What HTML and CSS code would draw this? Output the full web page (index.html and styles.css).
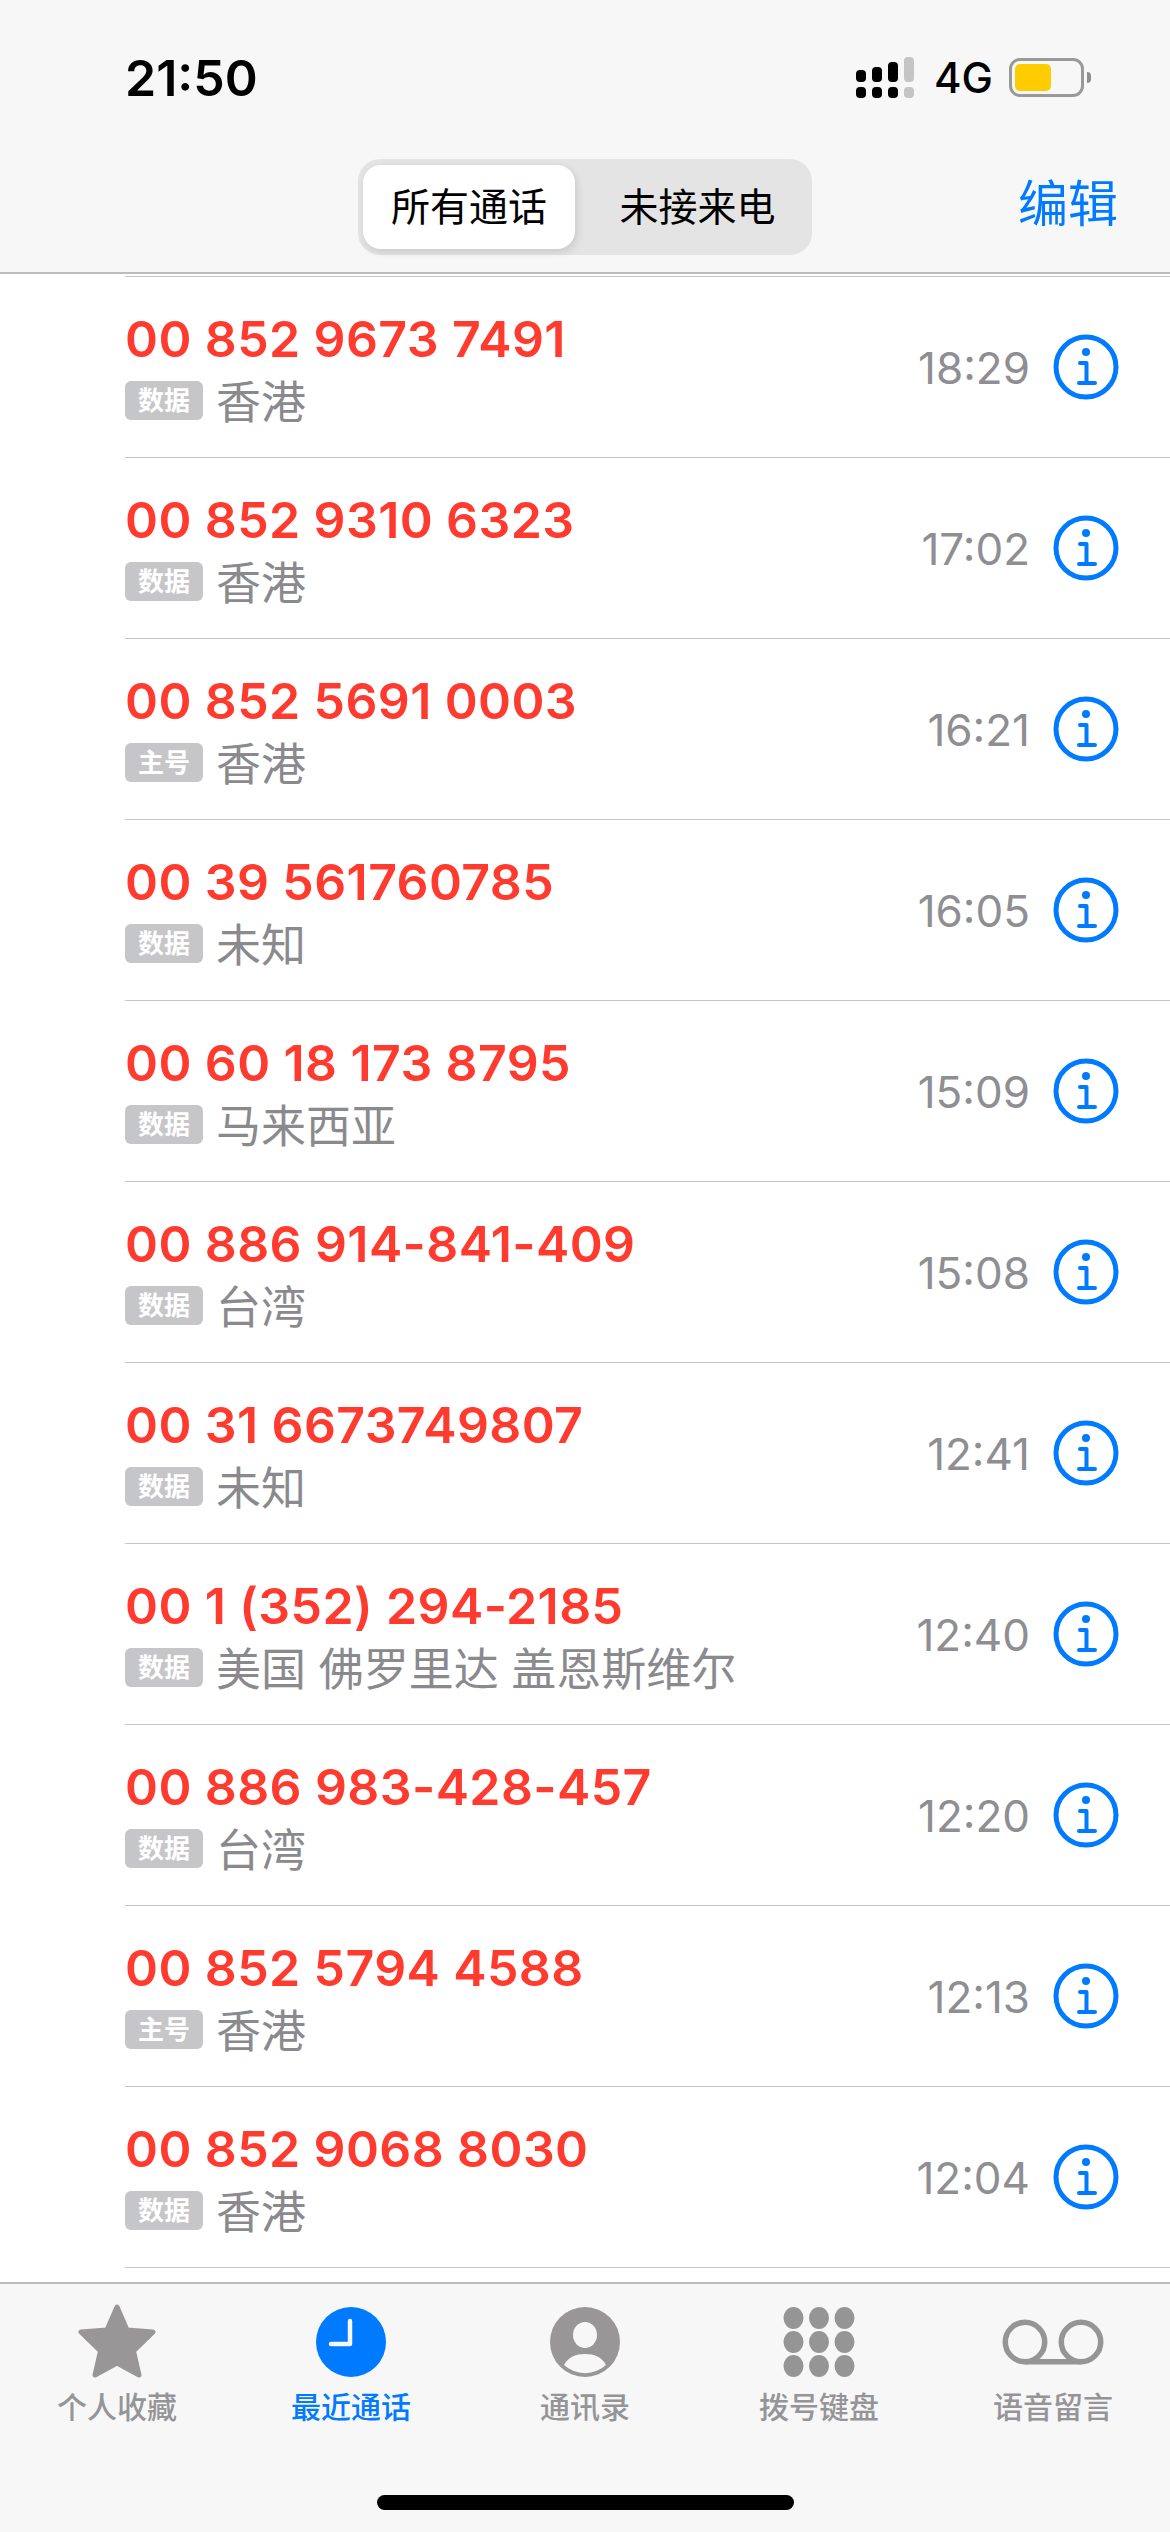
FILE: index.html
```html
<!DOCTYPE html>
<html lang="zh-CN">
<head>
  <meta charset="UTF-8">
  <meta name="viewport" content="width=device-width, initial-scale=1.0">
  <title>最近通话</title>
  <link rel="stylesheet" href="styles.css">
</head>
<body>
  <svg class="sprite" width="0" height="0">
    <symbol id="info" viewBox="0 0 66 66">
      <circle cx="33" cy="33" r="30" fill="none" stroke="#007aff" stroke-width="5"/>
      <circle cx="33" cy="18" r="4" fill="#007aff"/>
      <path d="M27 29H33.500V49M26 49H42" fill="none" stroke="#007aff" stroke-width="4" stroke-linecap="round" stroke-linejoin="round"/>
    </symbol>
  </svg>

  <div class="phone">
    <header class="top">
      <div class="status">
        <span class="clock">21:50</span>
        <div class="status-right">
          <svg class="signal" width="58" height="41" viewBox="0 0 58 41">
            <rect x="0" y="13" width="10" height="12" rx="4"/>
            <rect x="16" y="10" width="10" height="15" rx="4"/>
            <rect x="32" y="5" width="10" height="20" rx="4"/>
            <rect class="off" x="48" y="0" width="10" height="25" rx="4"/>
            <rect x="0" y="30" width="10" height="11" rx="4"/>
            <rect x="16" y="30" width="10" height="11" rx="4"/>
            <rect x="32" y="30" width="10" height="11" rx="4"/>
            <rect class="off" x="48" y="30" width="10" height="11" rx="4"/>
          </svg>
          <span class="net">4G</span>
          <div class="battery"><div class="battery-fill"></div></div>
          <div class="battery-nub"></div>
        </div>
      </div>
      <div class="nav">
        <div class="segment">
          <div class="seg-item active">所有通话</div>
          <div class="seg-item">未接来电</div>
        </div>
        <a class="edit">编辑</a>
      </div>
    </header>

    <main class="list">
      <div class="sliver"></div>

      <div class="row">
        <div class="row-main">
          <div class="number">00 852 9673 7491</div>
          <div class="meta"><span class="tag">数据</span><span class="place">香港</span></div>
        </div>
        <span class="time">18:29</span>
        <svg class="info"><use href="#info"/></svg>
      </div>
      <div class="row">
        <div class="row-main">
          <div class="number">00 852 9310 6323</div>
          <div class="meta"><span class="tag">数据</span><span class="place">香港</span></div>
        </div>
        <span class="time">17:02</span>
        <svg class="info"><use href="#info"/></svg>
      </div>
      <div class="row">
        <div class="row-main">
          <div class="number">00 852 5691 0003</div>
          <div class="meta"><span class="tag">主号</span><span class="place">香港</span></div>
        </div>
        <span class="time">16:21</span>
        <svg class="info"><use href="#info"/></svg>
      </div>
      <div class="row">
        <div class="row-main">
          <div class="number">00 39 561760785</div>
          <div class="meta"><span class="tag">数据</span><span class="place">未知</span></div>
        </div>
        <span class="time">16:05</span>
        <svg class="info"><use href="#info"/></svg>
      </div>
      <div class="row">
        <div class="row-main">
          <div class="number">00 60 18 173 8795</div>
          <div class="meta"><span class="tag">数据</span><span class="place">马来西亚</span></div>
        </div>
        <span class="time">15:09</span>
        <svg class="info"><use href="#info"/></svg>
      </div>
      <div class="row">
        <div class="row-main">
          <div class="number">00 886 914-841-409</div>
          <div class="meta"><span class="tag">数据</span><span class="place">台湾</span></div>
        </div>
        <span class="time">15:08</span>
        <svg class="info"><use href="#info"/></svg>
      </div>
      <div class="row">
        <div class="row-main">
          <div class="number">00 31 6673749807</div>
          <div class="meta"><span class="tag">数据</span><span class="place">未知</span></div>
        </div>
        <span class="time">12:41</span>
        <svg class="info"><use href="#info"/></svg>
      </div>
      <div class="row">
        <div class="row-main">
          <div class="number">00 1 (352) 294-2185</div>
          <div class="meta"><span class="tag">数据</span><span class="place">美国 佛罗里达 盖恩斯维尔</span></div>
        </div>
        <span class="time">12:40</span>
        <svg class="info"><use href="#info"/></svg>
      </div>
      <div class="row">
        <div class="row-main">
          <div class="number">00 886 983-428-457</div>
          <div class="meta"><span class="tag">数据</span><span class="place">台湾</span></div>
        </div>
        <span class="time">12:20</span>
        <svg class="info"><use href="#info"/></svg>
      </div>
      <div class="row">
        <div class="row-main">
          <div class="number">00 852 5794 4588</div>
          <div class="meta"><span class="tag">主号</span><span class="place">香港</span></div>
        </div>
        <span class="time">12:13</span>
        <svg class="info"><use href="#info"/></svg>
      </div>
      <div class="row">
        <div class="row-main">
          <div class="number">00 852 9068 8030</div>
          <div class="meta"><span class="tag">数据</span><span class="place">香港</span></div>
        </div>
        <span class="time">12:04</span>
        <svg class="info"><use href="#info"/></svg>
      </div>
    </main>

    <footer class="tabbar">
      <div class="tabs">
        <div class="tab">
          <svg class="tab-icon" width="80" height="76" viewBox="0 0 80 76">
            <path d="M40 3L50 26L76 28L56.500 47L62 71L40 59L18 71L23.500 47L4 28L30 26Z" fill="#989696" stroke="#989696" stroke-width="5" stroke-linejoin="round"/>
          </svg>
          <span>个人收藏</span>
        </div>
        <div class="tab active">
          <svg class="tab-icon" width="70" height="70" viewBox="0 0 70 70">
            <circle cx="35" cy="35" r="35" fill="#007aff"/>
            <path d="M34 14V37H15" fill="none" stroke="#f7f7f8" stroke-width="4.500" stroke-linecap="round" stroke-linejoin="round"/>
          </svg>
          <span>最近通话</span>
        </div>
        <div class="tab">
          <svg class="tab-icon" width="70" height="70" viewBox="0 0 70 70">
            <circle cx="35" cy="35" r="35" fill="#989696"/>
            <ellipse cx="35" cy="28" rx="12" ry="13" fill="#f7f7f8"/>
            <path d="M14 58C18 50 26 47 35 47C44 47 52 50 56 58A31 31 0 0 1 14 58Z" fill="#f7f7f8"/>
          </svg>
          <span>通讯录</span>
        </div>
        <div class="tab">
          <svg class="tab-icon" width="72" height="70" viewBox="0 0 72 70" fill="#959595">
            <ellipse cx="10.500" cy="11" rx="10" ry="11"/>
            <ellipse cx="36" cy="11" rx="10" ry="11"/>
            <ellipse cx="61.500" cy="11" rx="10" ry="11"/>
            <ellipse cx="10.500" cy="35" rx="10" ry="11"/>
            <ellipse cx="36" cy="35" rx="10" ry="11"/>
            <ellipse cx="61.500" cy="35" rx="10" ry="11"/>
            <ellipse cx="10.500" cy="59" rx="10" ry="11"/>
            <ellipse cx="36" cy="59" rx="10" ry="11"/>
            <ellipse cx="61.500" cy="59" rx="10" ry="11"/>
          </svg>
          <span>拨号键盘</span>
        </div>
        <div class="tab">
          <svg class="tab-icon" width="104" height="70" viewBox="0 0 104 70">
            <g fill="none" stroke="#959595" stroke-width="5.500">
              <circle cx="24" cy="35" r="19.700"/>
              <circle cx="80" cy="35" r="19.700"/>
              <path d="M24 54.700H80"/>
            </g>
          </svg>
          <span>语音留言</span>
        </div>
      </div>
      <div class="home-bar"></div>
    </footer>
  </div>
</body>
</html>
```

FILE: styles.css
```css
* {
  box-sizing: border-box;
}
html, body {
  margin: 0;
  padding: 0;
}
body {
  font-family: Inter, "Noto Sans CJK SC", sans-serif;
  background: #fff;
}
.sprite {
  position: absolute;
}
.phone {
  width: 1170px;
  height: 2532px;
  display: flex;
  flex-direction: column;
  overflow: hidden;
}

/* top area */
.top {
  height: 274px;
  flex: none;
  background: #f7f7f8;
  border-bottom: 2px solid #bcbcbe;
}
.status {
  height: 159px;
  padding: 57px 0 0 125px;
  display: flex;
  justify-content: space-between;
  align-items: flex-start;
}
.clock {
  font-size: 50px;
  line-height: 42px;
  font-weight: 600;
  color: #000;
}
.status-right {
  display: flex;
  align-items: center;
  height: 41px;
  padding-right: 79px;
}
.signal {
  fill: #000;
}
.signal .off {
  fill: #c5c5c5;
}
.net {
  margin-left: 20px;
  font-size: 42px;
  line-height: 41px;
  font-weight: 500;
  color: #000;
  width: 55px;
}
.battery {
  margin-left: 20px;
  width: 75px;
  height: 39px;
  border: 3px solid #999;
  border-radius: 11px;
  padding: 3px;
}
.battery-fill {
  width: 36px;
  height: 27px;
  background: #ffcc00;
  border-radius: 5px;
}
.battery-nub {
  width: 4px;
  height: 11px;
  margin-left: 3px;
  background: #8e8e8e;
  border-radius: 0 6px 6px 0;
}
.nav {
  display: grid;
  grid-template-columns: 1fr auto 1fr;
  align-items: center;
  height: 96px;
  padding: 0 52px;
}
.segment {
  grid-column: 2;
  width: 454px;
  height: 96px;
  padding: 6px 6px 6px 5px;
  background: #e4e4e5;
  border-radius: 22px;
  display: flex;
}
.seg-item {
  width: 212px;
  height: 84px;
  line-height: 84px;
  text-align: center;
  font-size: 39px;
  color: #000;
}
.seg-item + .seg-item {
  flex: 1;
  width: auto;
  padding-left: 14px;
}
.seg-item.active {
  background: #fff;
  border-radius: 18px;
  box-shadow: 2px 3px 8px rgba(0, 0, 0, 0.12);
}
.edit {
  grid-column: 3;
  justify-self: end;
  font-size: 50px;
  line-height: 60px;
  margin-bottom: 6px;
  color: #007aff;
}

/* call list */
.list {
  flex: 1;
  min-height: 0;
  overflow: hidden;
  background: #fff;
}
.sliver {
  height: 3px;
  margin-left: 125px;
  border-bottom: 1px solid #c6c6c8;
}
.row {
  height: 181px;
  margin-left: 125px;
  padding-right: 51px;
  border-bottom: 1px solid #c6c6c8;
  display: flex;
  align-items: center;
}
.row-main {
  flex: 1;
  min-width: 0;
  padding-top: 4px;
}
.number {
  font-size: 50px;
  line-height: 60px;
  font-weight: 600;
  letter-spacing: 0.4px;
  color: #ff3b30;
  white-space: nowrap;
}
.meta {
  display: flex;
  align-items: center;
  height: 60px;
}
.tag {
  width: 78px;
  height: 39px;
  line-height: 39px;
  margin-top: 2px;
  text-align: center;
  background: #c6c6c8;
  color: #fff;
  font-size: 26px;
  font-weight: 700;
  border-radius: 6px;
}
.place {
  margin-left: 13px;
  font-size: 45px;
  color: #8a8a8e;
}
.time {
  font-size: 44px;
  margin-top: 2px;
  color: #8e8e93;
}
.info {
  width: 66px;
  height: 66px;
  margin-left: 23px;
  flex: none;
}

/* tab bar */
.tabbar {
  height: 250px;
  flex: none;
  background: #f7f7f8;
  border-top: 2px solid #bcbcbe;
}
.tabs {
  display: grid;
  grid-template-columns: repeat(5, 1fr);
  height: 211px;
  padding-top: 20px;
}
.tab {
  display: flex;
  flex-direction: column;
  align-items: center;
  font-size: 30px;
  font-weight: 500;
  color: #959597;
}
.tab.active {
  color: #007aff;
}
.tab-icon {
  height: 76px;
  display: block;
}
.tab span {
  margin-top: 7px;
  line-height: 40px;
}
.home-bar {
  width: 417px;
  height: 15px;
  margin: 0 auto;
  background: #000;
  border-radius: 8px;
}
```
